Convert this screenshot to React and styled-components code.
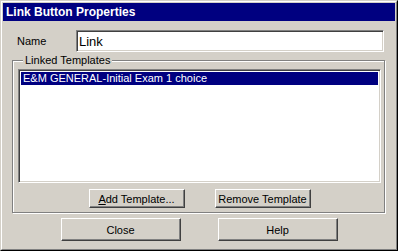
import styled, { createGlobalStyle } from 'styled-components'

const Global = createGlobalStyle`
    html, body {
        margin: 0;
        padding: 0;
        background: #d4d0c8;
    }
    * {
        box-sizing: border-box;
    }
`

const Window = styled.div`
    width: 398px;
    height: 251px;
    border: 1px solid;
    border-color: #d4d0c8 #000 #000 #d4d0c8;
    background: #d4d0c8;
    font-family: "Liberation Sans", Arial, sans-serif;
    font-size: 11px;
    color: #000;
`

const Frame = styled.div`
    height: 100%;
    border: 1px solid;
    border-color: #fff #808080 #808080 #fff;
    padding: 1px;
    display: flex;
    flex-direction: column;
`

const TitleBar = styled.div`
    height: 18px;
    background: #000080;
    color: #fff;
    font-weight: bold;
    font-size: 12px;
    display: flex;
    align-items: center;
    padding-left: 3px;
`

const Body = styled.div`
    padding: 9px 9px 0 9px;
    display: flex;
    flex-direction: column;
`

const Row = styled.div`
    display: flex;
    align-items: center;
`

const Label = styled.label`
    width: 64px;
    padding-left: 5px;
`

const TextBox = styled.input`
    width: 308px;
    height: 22px;
    margin: 0;
    padding: 0 2px;
    border: 1px solid;
    border-color: #808080 #fff #fff #808080;
    box-shadow: inset 1px 1px #404040, inset -1px -1px #d4d0c8;
    font-family: inherit;
    font-size: 13px;
    outline: none;
`

const Group = styled.fieldset`
    margin: 2px 0 0 0;
    padding: 2px 3px 4px 5px;
    width: 373px;
    min-inline-size: 0;
    border: 1px solid #808080;
    box-shadow: inset 1px 1px #fff, 1px 1px #fff;
    display: flex;
    flex-direction: column;
`

const Legend = styled.legend`
    margin-left: 5px;
    padding: 0 2px;
    background: #d4d0c8;
    line-height: 13px;
`

const ListBox = styled.div`
    width: 363px;
    height: 114px;
    background: #fff;
    border: 1px solid;
    border-color: #808080 #fff #fff #808080;
    box-shadow: inset 1px 1px #404040, inset -1px -1px #d4d0c8;
    padding: 2px 2px;
`

const ListItem = styled.div`
    height: 13px;
    line-height: 13px;
    padding-left: 2px;
    background: ${p => (p.$selected ? '#000080' : 'transparent')};
    color: ${p => (p.$selected ? '#fff' : '#000')};
    white-space: nowrap;
`

const ButtonRow = styled.div`
    display: flex;
    justify-content: center;
    gap: ${p => p.$gap}px;
    margin-top: ${p => p.$top}px;
`

const Button = styled.button`
    width: ${p => p.$w}px;
    height: ${p => p.$h}px;
    margin: 0;
    padding: 0;
    background: #d4d0c8;
    border: 1px solid;
    border-color: #fff #404040 #404040 #fff;
    box-shadow: inset -1px -1px #808080;
    font-family: "Liberation Sans", Arial, sans-serif;
    font-size: 11px;
    color: #000;
`

export default function App() {
    return (
        <>
            <Global />
            <Window>
                <Frame>
                    <TitleBar>Link Button Properties</TitleBar>
                    <Body>
                        <Row>
                            <Label>Name</Label>
                            <TextBox defaultValue="Link" />
                        </Row>
                        <Group>
                            <Legend>Linked Templates</Legend>
                            <ListBox>
                                <ListItem $selected>E&amp;M GENERAL-Initial Exam 1 choice</ListItem>
                            </ListBox>
                            <ButtonRow $gap={30} $top={6}>
                                <Button $w={96} $h={19}><u>A</u>dd Template...</Button>
                                <Button $w={96} $h={19}>Remove Template</Button>
                            </ButtonRow>
                        </Group>
                        <ButtonRow $gap={37} $top={5}>
                            <Button $w={120} $h={23}>Close</Button>
                            <Button $w={120} $h={23}>Help</Button>
                        </ButtonRow>
                    </Body>
                </Frame>
            </Window>
        </>
    )
}
